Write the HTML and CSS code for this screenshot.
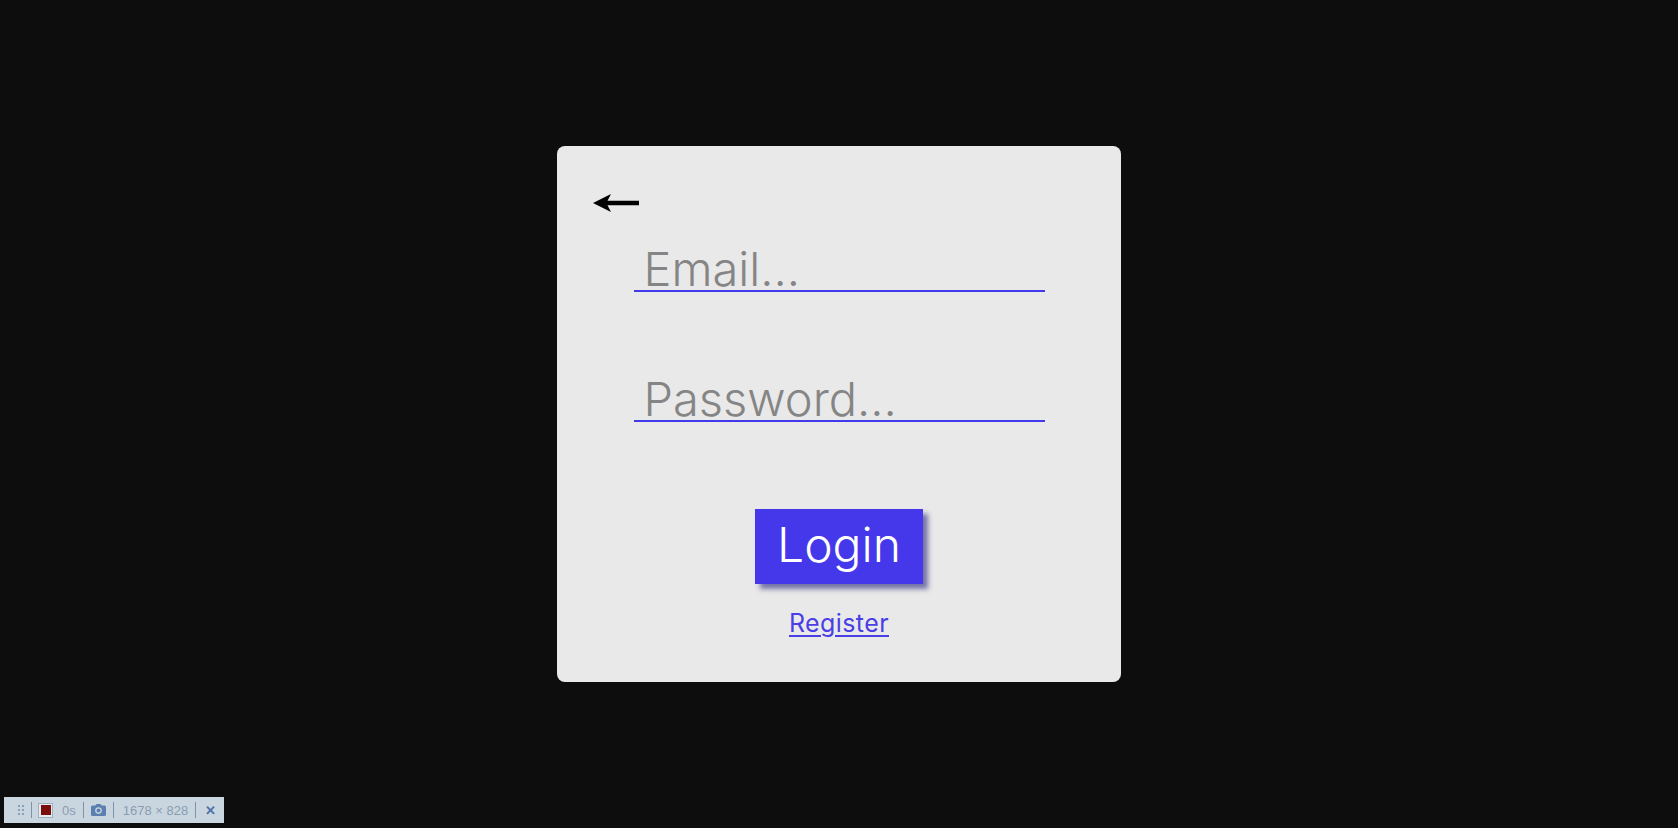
FILE: index.html
```html
<!DOCTYPE html>
<html lang="en">
<head>
<meta charset="utf-8">
<title>Login</title>
<link rel="stylesheet" href="styles.css">
</head>
<body>
<main class="page">
  <form class="card">
    <a class="back" href="#" aria-label="Back">
      <svg width="46" height="18" viewBox="0 0 46 18"><path d="M0 9 L18 0 L14.5 6.8 L46 6.8 L46 11.2 L14.5 11.2 L18 18 Z" fill="#000"/></svg>
    </a>
    <input class="field email" type="email" placeholder="Email...">
    <input class="field password" type="password" placeholder="Password...">
    <button class="login" type="button">Login</button>
    <a class="register" href="#">Register</a>
  </form>
</main>
<div class="toolbar">
  <span class="grip"><i></i><i></i><i></i><i></i><i></i><i></i></span>
  <span class="sep"></span>
  <span class="rec"><span class="rec-dot"></span></span>
  <span class="tb-text secs">0s</span>
  <span class="sep"></span>
  <svg class="cam" width="15" height="12" viewBox="0 0 15 12"><path d="M4.5 1.5 L5.5 0 L9.5 0 L10.5 1.5 L13.5 1.5 Q15 1.5 15 3 L15 10.5 Q15 12 13.5 12 L1.5 12 Q0 12 0 10.5 L0 3 Q0 1.5 1.5 1.5 Z" fill="#5a7fb0"/><circle cx="7.5" cy="6.6" r="3.3" fill="#c9d6e0"/><circle cx="7.5" cy="6.6" r="2" fill="#5a7fb0"/></svg>
  <span class="sep"></span>
  <span class="tb-text size">1678 × 828</span>
  <span class="sep"></span>
  <span class="close">✕</span>
</div>
</body>
</html>
```
FILE: styles.css
```css
html, body {
  margin: 0;
  padding: 0;
}
body {
  background: #0d0d0d;
  font-family: Inter, "Noto Sans", sans-serif;
  height: 828px;
  overflow: hidden;
}
.page {
  height: 828px;
  display: flex;
  align-items: center;
  justify-content: center;
}
.card {
  box-sizing: border-box;
  width: 564px;
  height: 536px;
  background: #e9e9e9;
  border-radius: 8px;
  padding: 48px 36px 0;
  display: flex;
  flex-direction: column;
  align-items: center;
}
.back {
  align-self: flex-start;
  display: block;
  width: 46px;
  height: 18px;
  line-height: 0;
}
.field {
  box-sizing: content-box;
  width: 401px;
  height: 43px;
  margin: 0;
  padding: 0 0 0 10px;
  border: none;
  border-bottom: 2px solid #4338ea;
  background: transparent;
  font-family: Inter, "Noto Sans", sans-serif;
  font-weight: 300;
  font-size: 47px;
  line-height: 47px;
  color: #333;
  outline: none;
}
.field::placeholder {
  color: #858585;
  opacity: 1;
}
.email {
  margin-top: 35px;
}
.password {
  margin-top: 85px;
}
.login {
  margin-top: 87px;
  box-sizing: border-box;
  width: 168px;
  height: 75px;
  padding: 7px 0 10px;
  border: none;
  border-radius: 0;
  background: #4538ea;
  color: #fff;
  font-family: Inter, "Noto Sans", sans-serif;
  font-weight: 300;
  font-size: 48px;
  line-height: 58px;
  box-shadow: 5px 5px 5px rgba(50, 50, 130, 0.65);
  cursor: pointer;
}
.register {
  margin-top: 23px;
  font-size: 25px;
  font-weight: 400;
  letter-spacing: 0.4px;
  line-height: 32px;
  color: #4a3fe6;
  text-decoration: underline;
  text-decoration-thickness: 2px;
  text-underline-offset: 3px;
}

/* bottom-left screenshot toolbar */
.toolbar {
  position: fixed;
  left: 4px;
  top: 797px;
  width: 220px;
  height: 26px;
  box-sizing: border-box;
  background: #c9d6e0;
  display: flex;
  align-items: center;
  padding-left: 14px;
  font-family: "Liberation Sans", Arial, sans-serif;
}
.grip {
  display: grid;
  grid-template-columns: 2px 2px;
  column-gap: 2px;
  row-gap: 2px;
}
.grip i {
  display: block;
  width: 2px;
  height: 2px;
  background: #8aa2b8;
}
.sep {
  width: 1px;
  height: 16px;
  background: #7f93a6;
  margin: 0 7px;
}
.rec {
  width: 15px;
  height: 15px;
  box-sizing: border-box;
  border: 1px solid #9fb0bf;
  background: #e4ebf0;
  display: flex;
  align-items: center;
  justify-content: center;
  margin-left: -1px;
}
.rec-dot {
  width: 10px;
  height: 10px;
  background: #7b0d0a;
}
.tb-text {
  font-size: 13px;
  color: #8a9db0;
}
.secs {
  margin-left: 9px;
}
.size {
  margin-left: 2px;
}
.cam {
  display: block;
}
.close {
  font-size: 13px;
  font-weight: bold;
  color: #4f71a6;
  margin-left: 2px;
}
```
